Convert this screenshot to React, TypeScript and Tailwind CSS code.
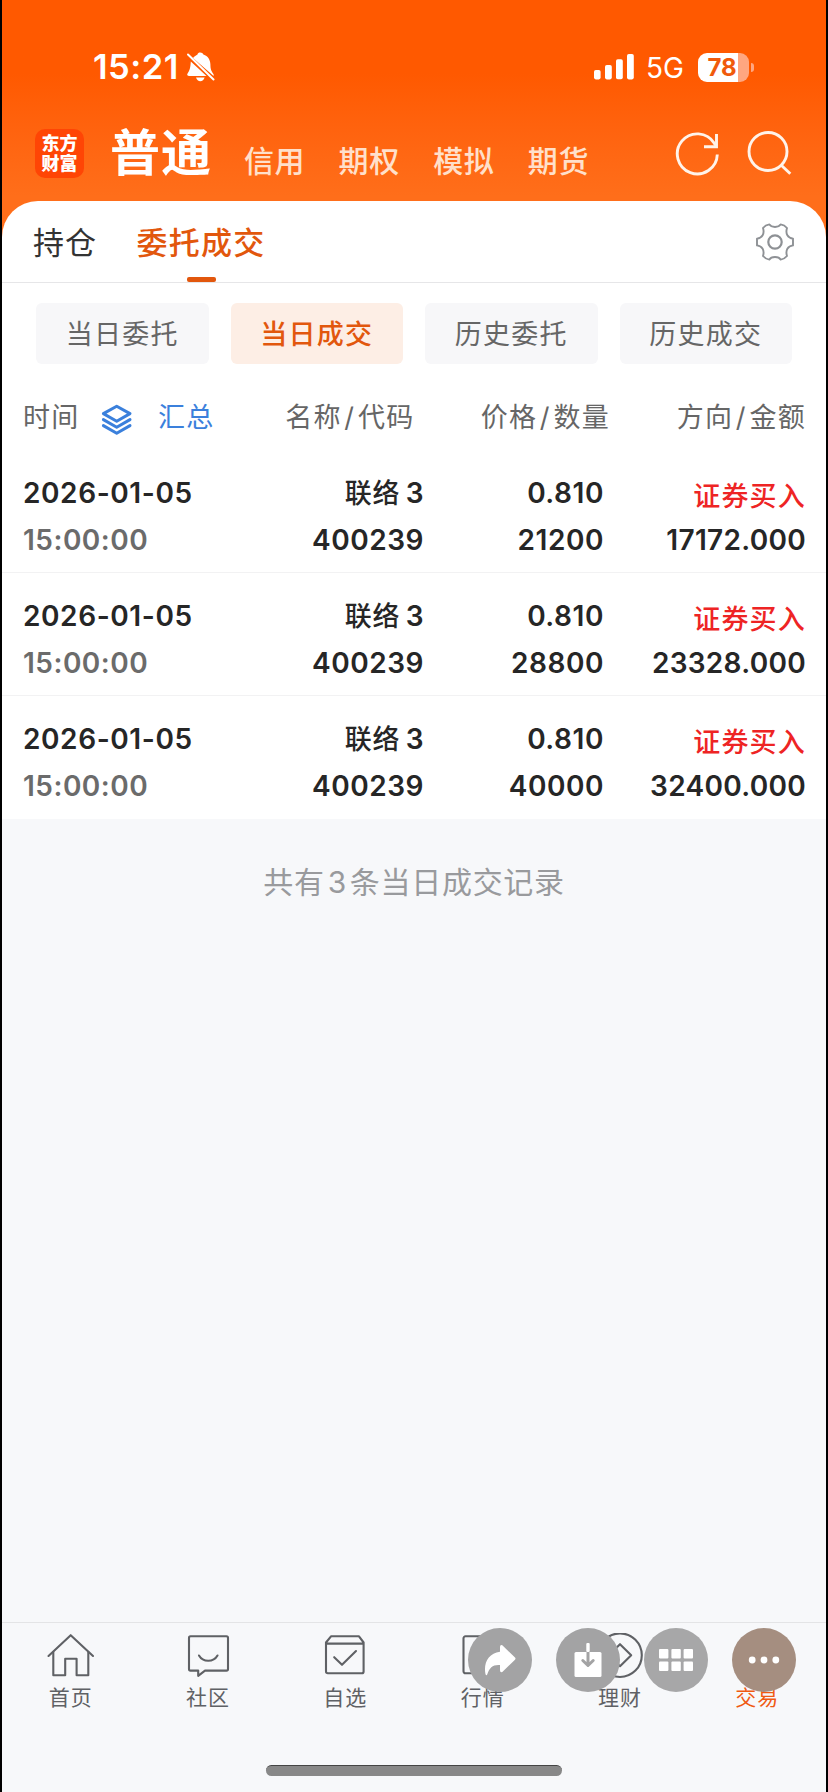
import React from "react";

const trades = [
  { date: "2026-01-05", time: "15:00:00", name: "联络", code: "400239", price: "0.810", qty: "21200", amount: "17172.000" },
  { date: "2026-01-05", time: "15:00:00", name: "联络", code: "400239", price: "0.810", qty: "28800", amount: "23328.000" },
  { date: "2026-01-05", time: "15:00:00", name: "联络", code: "400239", price: "0.810", qty: "40000", amount: "32400.000" },
];

function StatusBar() {
  return (
    <div className="flex h-[36px] items-center text-white">
      <span className="ml-[91px] w-[93px] whitespace-nowrap text-[34.5px] leading-[36px] font-semibold tracking-[0.5px]">15:21</span>
      <svg className="ml-[1px] h-[30px] w-[28px]" viewBox="186 52 28 30" fill="white">
        <path d="M192 58C193.6 56.2 195 55.2 196.3 54.7C196.6 53 198 52.4 199.2 52.4C200.7 52.4 202 53.3 202.4 54.6C207 56 209.3 60 209.4 64.5C209.5 69 210 70.5 212.6 74.2V76Z" />
        <path d="M189.8 61.6L205.5 76H188C186.4 76 185.7 74.7 186.6 73.4C188.7 70.5 189.4 68 189.8 61.6Z" />
        <path d="M195 77.6H203.6C203 80 201.2 81.2 199.3 81.2S195.7 80 195 77.6Z" />
        <path d="M187 54.5L212.5 79.5" stroke="white" strokeWidth="2" strokeLinecap="round" />
      </svg>
      <svg className="ml-[379px] h-[26px] w-[40px]" viewBox="593 54 40 26" fill="white">
        <rect x="593" y="70" width="6.6" height="9.4" rx="1.8" />
        <rect x="604" y="65" width="6.8" height="14.4" rx="1.8" />
        <rect x="615" y="59.3" width="6.8" height="20" rx="1.8" />
        <rect x="626" y="54" width="6.8" height="25.4" rx="1.8" />
      </svg>
      <span className="ml-[12px] w-[52px] whitespace-nowrap pt-[3px] text-[28px] leading-[33px]">5G</span>
      <div className="flex h-[29px] w-[51px] shrink-0 items-center justify-center rounded-[9px] bg-linear-to-r from-white from-79% to-[#ffa680] to-79% text-[24px] leading-[29px] font-bold text-[#f05a0c]">
        <span className="-ml-[3px]">78</span>
      </div>
      <div className="ml-[2px] h-[9px] w-[3px] rounded-r-full bg-[#ffa680]" />
    </div>
  );
}

function Header() {
  return (
    <div className="flex h-[120px] shrink-0 items-start text-white">
      <div className="mt-[29px] ml-[33px] flex h-[49px] w-[49px] flex-col items-center justify-center rounded-[10px] bg-[#ff4505] text-[18px] leading-[20px] font-black">
        <span>东方</span>
        <span>财富</span>
      </div>
      <div className="mt-[22px] ml-[26px] w-[104px] whitespace-nowrap text-[50px] leading-[62px] font-bold tracking-[1px]">普通</div>
      <div className="mt-[41px] ml-[30px] flex gap-[33.4px] whitespace-nowrap text-[30px] leading-[40px] font-medium tracking-[0.6px] text-[#ffe0cb]">
        <span>信用</span>
        <span>期权</span>
        <span>模拟</span>
        <span>期货</span>
      </div>
      <svg className="mt-[30px] ml-auto h-[48px] w-[120px]" viewBox="674 130 120 48" fill="none" stroke="#fff3ea" strokeWidth="2.9">
        <path d="M717.3 154.5A20 20 0 1 1 714.3 143.3L716.5 146" />
        <path d="M716.5 134V146.7H704" />
        <circle cx="768" cy="151.5" r="19" />
        <path d="M781 165L790.3 173.8" />
      </svg>
      <div className="w-[32px]" />
    </div>
  );
}

function Tabs() {
  return (
    <div className="flex h-[82px] shrink-0 items-start border-b border-[#e6e6e8]">
      <div className="mt-[21px] ml-[31px] w-[103px] whitespace-nowrap text-[31px] leading-[42px] tracking-[1px] text-[#333]">持仓</div>
      <div className="flex w-[130px] flex-col items-center">
        <span className="mt-[21px] whitespace-nowrap text-[31px] leading-[42px] font-medium tracking-[1.2px] text-[#e2570d]">委托成交</span>
        <span className="mt-[13px] h-[5px] w-[29px] rounded-[2px] bg-[#e2570d]" />
      </div>
      <svg className="mt-[22px] mr-[32px] ml-auto h-[38px] w-[38px]" viewBox="-19 -19 38 38" fill="none" stroke="#8e9195" strokeWidth="1.9" strokeLinejoin="round">
        <path d="M-5.6 -17.6C-3.8 -14.2 3.8 -14.2 5.6 -17.6Q9.5 -17 12 -14C10.2 -8.2 12.8 -3.9 18 -3.4V3.4C12.8 3.9 10.2 8.2 12 14Q9.5 17 5.6 17.6C3.8 14.2 -3.8 14.2 -5.6 17.6Q-9.5 17 -12 14C-10.2 8.2 -12.8 3.9 -18 3.4V-3.4C-12.8 -3.9 -10.2 -8.2 -12 -14Q-9.5 -17 -5.6 -17.6Z" />
        <circle r="6.7" strokeWidth="2.2" />
      </svg>
    </div>
  );
}

function Filters() {
  const base = "flex h-[61px] items-center justify-center rounded-[6px] pt-[4px] text-[27px] tracking-[1.2px] whitespace-nowrap";
  return (
    <div className="mx-[34px] mt-[20px] grid shrink-0 grid-cols-4 gap-[22px]">
      <div className={base + " bg-[#f7f7f9] text-[#666]"}>当日委托</div>
      <div className={base + " bg-[#fdeee5] font-medium text-[#e2570d]"}>当日成交</div>
      <div className={base + " bg-[#f7f7f9] text-[#666]"}>历史委托</div>
      <div className={base + " bg-[#f7f7f9] text-[#666]"}>历史成交</div>
    </div>
  );
}

function Slash() {
  return <span className="mx-[2.5px]">/</span>;
}

function Columns() {
  return (
    <div className="flex h-[86px] shrink-0 items-start pt-[34px] text-[27px] leading-[40px] tracking-[1.3px] whitespace-nowrap text-[#666]">
      <span className="ml-[21px] w-[77px]">时间</span>
      <svg className="mt-[5px] ml-[1px] h-[32px] w-[32px]" viewBox="101 403 32 32" fill="none" stroke="#3b80dc" strokeWidth="3" strokeLinejoin="round" strokeLinecap="round">
        <path d="M116.7 406.2L130 413.6L116.7 421.2L103.4 413.6Z" />
        <path d="M103.4 419.6L116.7 427.2L130 419.6" />
        <path d="M103.4 425.6L116.7 433.2L130 425.6" />
      </svg>
      <span className="ml-[25px] text-[#3b80dc]">汇总</span>
      <span className="ml-auto w-[140px] text-right">名称<Slash />代码</span>
      <span className="w-[195.5px] text-right">价格<Slash />数量</span>
      <span className="w-[196px] text-right">方向<Slash />金额</span>
      <span className="w-[20px]" />
    </div>
  );
}

function TradeRow({ t, last }: { t: (typeof trades)[number]; last: boolean }) {
  return (
    <div className={"flex h-[123px] shrink-0 pt-[20px] text-[28px] leading-[47px] font-semibold tracking-[0.55px] whitespace-nowrap text-[#262626] " + (last ? "" : "border-b border-[#f2f2f3]")}>
      <div className="ml-[21px] w-[200px]">
        <div className="tracking-[0.6px]">{t.date}</div>
        <div className="tracking-[0.5px] text-[#6b6b6b]">{t.time}</div>
      </div>
      <div className="w-[201px] text-right">
        <div className="flex justify-end gap-[5px]">
          <span className="text-[27px] font-medium tracking-[1px]">{t.name}</span>
          <span>3</span>
        </div>
        <div>{t.code}</div>
      </div>
      <div className="w-[180px] text-right">
        <div>{t.price}</div>
        <div>{t.qty}</div>
      </div>
      <div className="w-[202px] text-right">
        <div className="h-[47px] pt-[3px] text-[27px] font-medium tracking-[1.2px] text-[#ee2424]">证券买入</div>
        <div className="tracking-[0.3px]">{t.amount}</div>
      </div>
    </div>
  );
}

const navIcon = "h-[48px] w-[48px]";

function Nav() {
  const items = [
    { label: "首页", icon: <><path d="M1.5 23L23.7 2.2L46 23" /><path d="M6.3 19V42.3H18.2V25.8H29.6V42.3H41.3V19" /></> },
    { label: "社区", icon: <path d="M6.5 3.3H42.5Q44 3.3 44 4.8V36Q44 37.6 42.5 37.6H21L14.2 42.8V37.6H6.5Q5 37.6 5 36V4.8Q5 3.3 6.5 3.3ZM15 22.5C19 29.5 29.5 29.5 33.5 22.5" /> },
    { label: "自选", icon: <><path d="M10 3.3H38L42.6 9.5V38.5Q42.6 40.3 40.8 40.3H6.8Q5 40.3 5 38.5V9.5ZM5 10.6H42.6" /><path d="M13.2 24.2L21 31.8L35 18" /></> },
    { label: "行情", icon: <rect x="4.5" y="3.3" width="38" height="37" rx="2" /> },
    { label: "理财", icon: <><circle cx="24" cy="22.2" r="21.8" /><path d="M24 11.2L35.2 22.2L24 33.2L12.8 22.2Z" /></> },
    { label: "交易", icon: null },
  ];
  return (
    <div className="relative mt-auto flex h-[170px] shrink-0 flex-col border-t border-[#e3e4e6]">
      <div className="grid grid-cols-6 pt-[10px]">
        {items.map((it, i) => (
          <div key={it.label} className={"flex flex-col items-center " + (i === 5 ? "text-[#f05a12]" : "text-[#5f6165]")}>
            <svg className={navIcon} viewBox="0 0 48 48" fill="none" stroke="currentColor" strokeWidth="2.1" strokeLinejoin="round" strokeLinecap="round">{it.icon}</svg>
            <span className="mt-[2px] text-[21px] leading-[30px] tracking-[1px]">{it.label}</span>
          </div>
        ))}
      </div>
      <div className="mx-auto mt-auto mb-[16px] h-[11px] w-[296px] rounded-full border-t border-[#444] bg-[#888]" />
      <div className="absolute top-[5px] left-[466px] flex gap-[24px]">
        <svg className="size-[64px]" viewBox="0 0 64 64"><circle cx="32" cy="32" r="32" fill="#a3a3a4" /><path d="M32 19Q32 16.5 34.3 17.2L47 29.5Q48 30.6 47 31.7L34.3 44Q32 44.7 32 42.3V37C25 36.4 21.5 39.5 19.3 46.3Q18.5 48.3 17.5 46.3C15.2 35 20.5 25 32 23.7Z" fill="white" /></svg>
        <svg className="size-[64px]" viewBox="0 0 64 64"><circle cx="32" cy="32" r="32" fill="#a3a3a4" /><rect x="18.5" y="24" width="27" height="25" rx="1.5" fill="white" /><path d="M32 24V37M26.8 32.5L32 37.5L37.2 32.5" stroke="#a3a3a4" strokeWidth="3" fill="none" strokeLinecap="round" strokeLinejoin="round" /><rect x="30.3" y="15" width="3.4" height="9" rx="1" fill="white" /></svg>
        <svg className="size-[64px]" viewBox="0 0 64 64"><circle cx="32" cy="32" r="32" fill="#a7a7a8" /><g fill="white"><rect x="15" y="21" width="9.4" height="9.6" rx="1" /><rect x="27.4" y="21" width="9.4" height="9.6" rx="1" /><rect x="39.6" y="21" width="9.4" height="9.6" rx="1" /><rect x="15" y="33.4" width="9.4" height="9.6" rx="1" /><rect x="27.4" y="33.4" width="9.4" height="9.6" rx="1" /><rect x="39.6" y="33.4" width="9.4" height="9.6" rx="1" /></g></svg>
        <svg className="size-[64px]" viewBox="0 0 64 64"><circle cx="32" cy="32" r="32" fill="#a58e80" /><g fill="white"><circle cx="20.2" cy="32" r="3.4" /><circle cx="32" cy="32" r="3.4" /><circle cx="43.8" cy="32" r="3.4" /></g></svg>
      </div>
    </div>
  );
}

export default function App() {
  return (
    <div className="h-[1792px] w-[828px] overflow-hidden bg-black px-[2px] font-['Inter','Noto_Sans_CJK_SC',sans-serif]">
      <div className="flex h-full flex-col bg-[#f7f8fa]">
        <div className="flex shrink-0 flex-col bg-linear-to-b from-[#ff5900] from-9% to-[#ff6e1a] to-24% pt-[49px]">
          <StatusBar />
          <div className="-mt-[4px] pt-[19px]"><Header /></div>
          <div className="-mt-[19px] flex flex-col rounded-t-[36px] bg-white">
            <Tabs />
            <Filters />
            <Columns />
            {trades.map((t, i) => (
              <TradeRow key={t.qty} t={t} last={i === trades.length - 1} />
            ))}
          </div>
        </div>
        <div className="mt-[43px] text-center text-[30px] leading-[40px] tracking-[0.7px] text-[#999a9d]">
          共有<span className="mx-[3px]">3</span>条当日成交记录
        </div>
        <Nav />
      </div>
    </div>
  );
}
